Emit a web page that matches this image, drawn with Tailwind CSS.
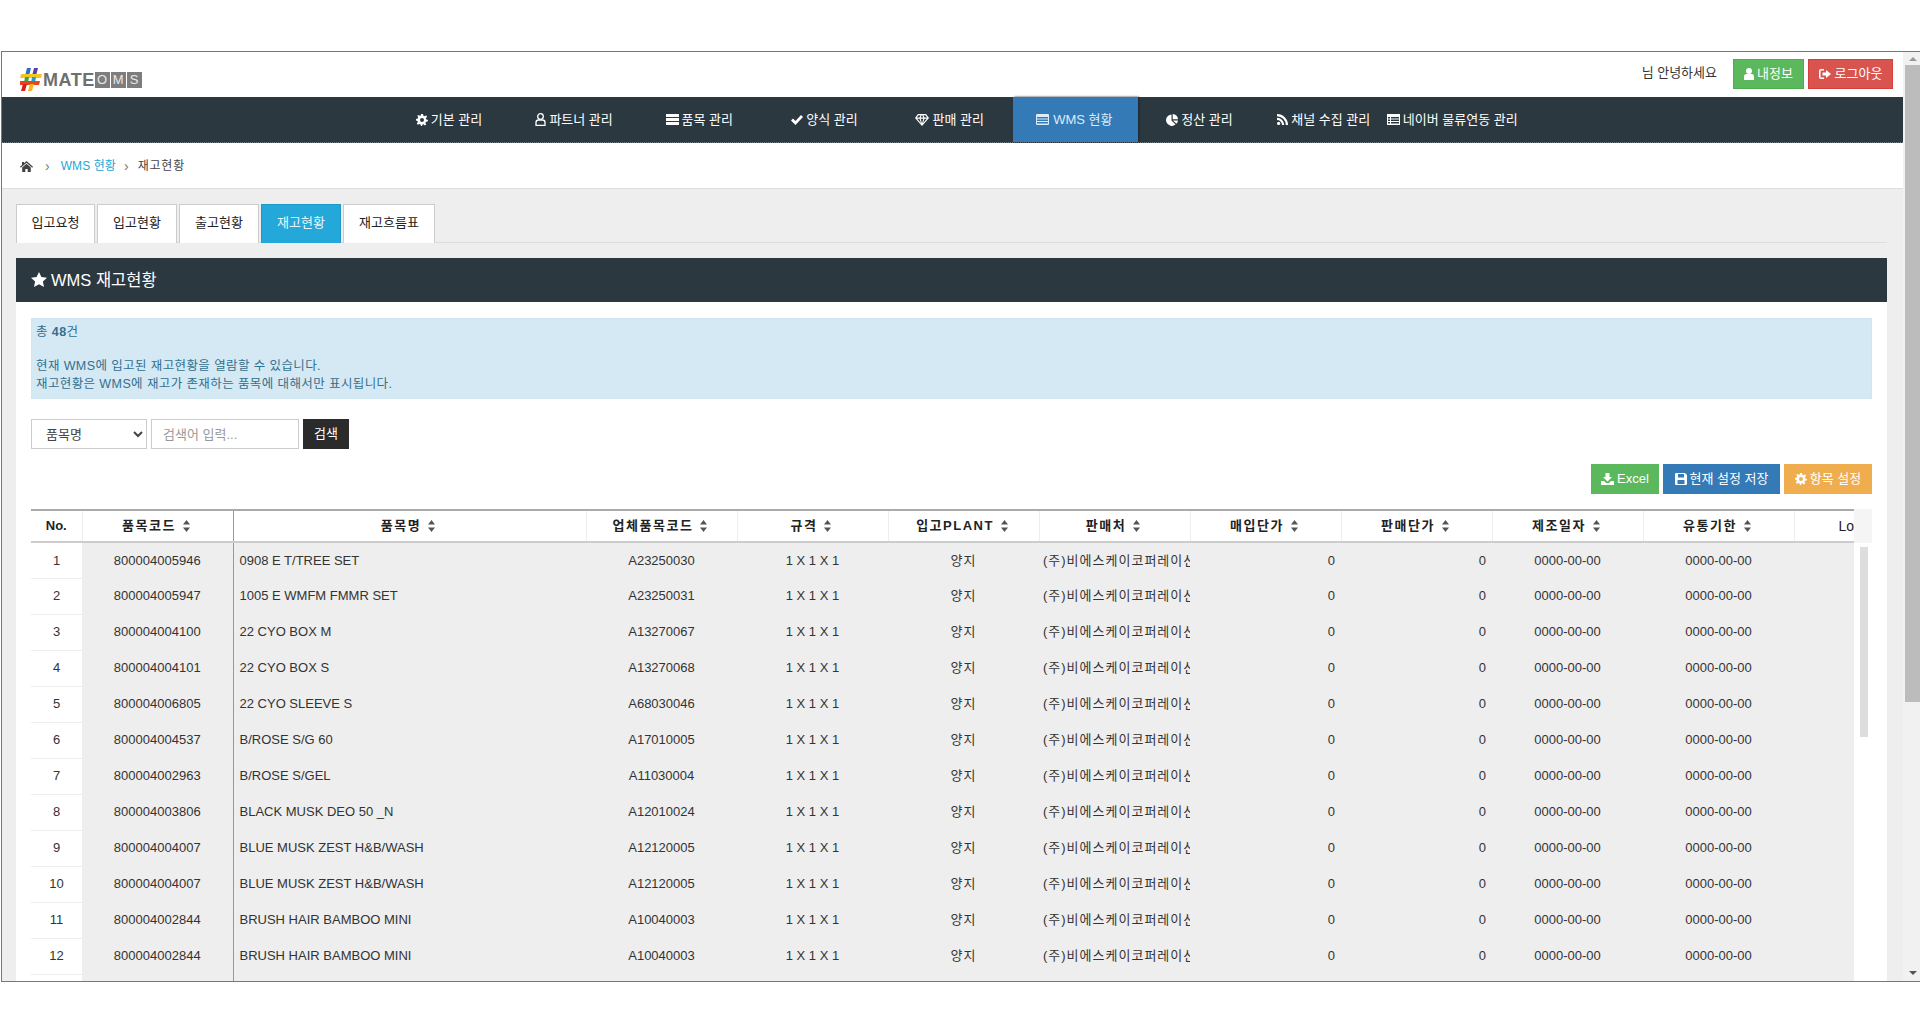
<!DOCTYPE html>
<html lang="ko">
<head>
  <meta charset="utf-8"/>
  <meta content="width=device-width, initial-scale=1.0" name="viewport"/>
  <title>MATE OMS - WMS 재고현황</title>
  <script src="https://cdn.jsdelivr.net/npm/@tailwindcss/browser@4"></script>
</head>
<body class="bg-white h-[1030px] overflow-hidden pt-[51px] text-[13px] text-[#333] font-['Liberation_Sans','Noto_Sans_CJK_KR',sans-serif]">
  <div class="h-[929px] border-t border-b border-l border-[#777] ml-px flex overflow-hidden box-content">
    <div class="w-[1901px] flex flex-col overflow-hidden">
      <!-- top bar -->
      <header class="h-[45px] shrink-0 bg-white flex justify-between pl-[18px] pr-[10px]">
        <div class="flex items-center pt-[10px] gap-[1px]">
          <svg width="22" height="23" viewBox="0 0 22 23">
            <polygon points="7,0 11,0 9,8 5,8" fill="#2f6fc4"/>
            <polygon points="14,0 18,0 16,8 12,8" fill="#5b3fa8"/>
            <polygon points="1,6 22,6 21,10 0,10" fill="#f2c81e"/>
            <polygon points="5,9 9,9 8,15 4,15" fill="#3aa64a"/>
            <polygon points="12,9 16,9 15,15 11,15" fill="#1f9fd0"/>
            <polygon points="0,13 20,13 19,17 0,17" fill="#e8451f"/>
            <polygon points="3,16 7,16 5,23 1,23" fill="#d81e1e"/>
            <polygon points="10,16 14,16 12,23 8,23" fill="#f5b51b"/>
          </svg>
          <span class="font-bold text-[18px] leading-none text-[#6f6f6f] tracking-[0.5px]">MATE</span>
          <span class="flex gap-px -ml-[1px]">
            <span class="w-[15px] h-[16px] bg-[#7d7d7d] text-[#e8e8e8] text-[13px] leading-[16px] text-center">O</span>
            <span class="w-[15px] h-[16px] bg-[#7d7d7d] text-[#e8e8e8] text-[13px] leading-[16px] text-center">M</span>
            <span class="w-[15px] h-[16px] bg-[#7d7d7d] text-[#e8e8e8] text-[13px] leading-[16px] text-center">S</span>
          </span>
        </div>
        <div class="flex items-start pt-[7px]">
          <span class="mt-[5px] mr-[16px] leading-[18px]">님 안녕하세요</span>
          <a class="h-[30px] w-[71px] flex items-center justify-center gap-[3px] bg-[#5cb85c] border border-[#4cae4c] text-white" href="#">
            <svg width="10" height="12" viewBox="0 0 10 12" fill="#fff"><circle cx="5" cy="3" r="3"/><path d="M0 12V8.500Q0 6 2.500 6H7.500Q10 6 10 8.500V12Z"/></svg>내정보
          </a>
          <a class="ml-[4px] h-[30px] w-[85px] flex items-center justify-center gap-[4px] bg-[#d9534f] border border-[#d43f3a] text-white" href="#">
            <svg width="12" height="12" viewBox="0 0 12 12" fill="#fff"><path d="M5 1H2Q0 1 0 3V9Q0 11 2 11H5V9.500H2.500Q1.500 9.500 1.500 8.500V3.500Q1.500 2.500 2.500 2.500H5Z"/><path d="M7 2L12 6L7 10V7.500H3.500V4.500H7Z"/></svg>로그아웃
          </a>
        </div>
      </header>

      <!-- main nav -->
      <nav class="h-[46px] shrink-0 bg-[#2b3840] border-b border-dotted border-[#6f7a80] flex justify-center text-white">
        <a class="w-[125.200px] pr-[2px] flex items-center justify-center gap-[3px]" href="#">
          <svg width="12" height="12" viewBox="0 0 12 12" fill="#fff"><path fill-rule="evenodd" d="M5 0H7L7.400 1.700 8.700 2.200 10.200 1.300 11 3 9.800 4.200 10.100 5.300 12 6 11.700 7.500 10 7.700 9.400 9 10.300 10.500 8.900 11.400 7.600 10.300 6.500 10.500 6 12H5L4.500 10.400 3.300 9.900 1.800 10.800 0.800 9.500 1.900 8.100 1.500 7 0 6.500 0 5 1.700 4.600 2.200 3.300 1.300 1.800 2.800 0.900 4.100 2 4.700 1.600ZM6 4A2 2 0 1 0 6 8 2 2 0 1 0 6 4Z"/></svg>기본 관리
        </a>
        <a class="w-[125.200px] pr-[2px] flex items-center justify-center gap-[3px]" href="#">
          <svg width="11" height="13" viewBox="0 0 11 13" fill="none" stroke="#fff" stroke-width="1.300"><circle cx="5.500" cy="3.500" r="2.800"/><path d="M1 12.300V9.500Q1 7 3.500 7H7.500Q10 7 10 9.500V12.300Z"/></svg>파트너 관리
        </a>
        <a class="w-[125.200px] pr-[2px] flex items-center justify-center gap-[3px]" href="#">
          <svg width="13" height="11" viewBox="0 0 13 11" fill="#fff"><path d="M0 0H13V3H0ZM0 4H13V7H0ZM0 8H13V11H0Z"/></svg>품목 관리
        </a>
        <a class="w-[125.200px] pr-[2px] flex items-center justify-center gap-[3px]" href="#">
          <svg width="12" height="10" viewBox="0 0 12 10" fill="#fff"><path d="M0 5.500L2 3.500 4.500 6 10 0 12 2 4.500 10Z"/></svg>양식 관리
        </a>
        <a class="w-[125.200px] pr-[2px] flex items-center justify-center gap-[3px]" href="#">
          <svg width="14" height="12" viewBox="0 0 14 12" fill="#fff"><path fill-rule="evenodd" d="M3 0H11L14 4 7 12 0 4ZM3.600 1.200L1.800 3.600H4.500L5.500 1.200ZM6.700 1.200L5.700 3.600H8.300L7.300 1.200ZM8.500 1.200L9.500 3.600H12.200L10.400 1.200ZM2.200 4.700L6 9.200 4.500 4.700ZM5.700 4.700L7 9.500 8.300 4.700ZM9.500 4.700L8 9.200 11.800 4.700Z"/></svg>판매 관리
        </a>
        <a class="w-[125.200px] pr-[3px] flex items-center justify-center gap-[4px] bg-[#337ab7] text-[#dcebf7] shadow-[1px_0_2px_#1d2830]" href="#">
          <svg width="13" height="11" viewBox="0 0 13 11" fill="#dcebf7"><path fill-rule="evenodd" d="M1 0H12Q13 0 13 1V10Q13 11 12 11H1Q0 11 0 10V1Q0 0 1 0ZM1 3V4.500H12V3ZM1 5.500V7H12V5.500ZM1 8V9.500H12V8Z"/></svg>WMS 현황
        </a>
        <a class="w-[125.200px] pr-[3px] flex items-center justify-center gap-[3px]" href="#">
          <svg width="12" height="12" viewBox="0 0 12 12" fill="#fff"><path d="M5.500 0.500V6.500L9.500 10.500A5.700 5.700 0 1 1 5.500 0.500Z"/><path d="M6.700 0A5.500 5.500 0 0 1 12 5.300H6.700Z"/><path d="M7 6.500H12A5.500 5.500 0 0 1 10.400 9.800Z"/></svg>정산 관리
        </a>
        <a class="w-[125.200px] pr-[5px] flex items-center justify-center gap-[3px]" href="#">
          <svg width="11" height="11" viewBox="0 0 11 11" fill="#fff"><circle cx="1.600" cy="9.400" r="1.600"/><path d="M0 3.800A7.200 7.200 0 0 1 7.200 11H5A5 5 0 0 0 0 6Z"/><path d="M0 0A11 11 0 0 1 11 11H8.800A8.800 8.800 0 0 0 0 2.200Z"/></svg>채널 수집 관리
        </a>
        <a class="flex items-center gap-[3px] -ml-[2px]" href="#">
          <svg width="13" height="11" viewBox="0 0 13 11" fill="#fff"><path fill-rule="evenodd" d="M0 0H13V11H0ZM1 3V4.500H3V3ZM4 3V4.500H12V3ZM1 5.500V7H3V5.500ZM4 5.500V7H12V5.500ZM1 8V9.500H3V8ZM4 8V9.500H12V8Z"/></svg>네이버 물류연동 관리
        </a>
      </nav>

      <!-- breadcrumb -->
      <div class="h-[46px] shrink-0 bg-white border-b border-[#ddd] flex items-center pl-[18px] pt-[1px] text-[12px]">
        <svg width="13" height="11" viewBox="0 0 13 11" fill="#444"><path d="M6.500 0L13 5.800 12.200 6.700 6.500 1.700 0.800 6.700 0 5.800 2 4V1H4V2.200Z"/><path d="M2.200 6.500L6.500 2.800 10.800 6.500V11H7.700V8H5.300V11H2.200Z"/></svg>
        <span class="ml-[12px] text-[#777] text-[14px] leading-none">›</span>
        <a class="ml-[11px] text-[#22a7d5] tracking-[0.100px]" href="#">WMS 현황</a>
        <span class="ml-[8px] text-[#777] text-[14px] leading-none">›</span>
        <span class="ml-[9px] text-[#444] tracking-[0.800px]">재고현황</span>
      </div>

      <div class="flex-1 bg-[#eeeeee] pl-[14px] pr-[16px] pt-[15px] min-h-0 flex flex-col">
        <!-- tabs -->
        <div class="h-[39px] shrink-0 flex gap-[2px] border-b border-[#ddd]">
          <a class="h-[39px] pb-[2px] w-[79px] bg-white border border-[#ccc] border-b-0 flex items-center justify-center text-[#222]" href="#">입고요청</a>
          <a class="h-[39px] pb-[2px] w-[80px] bg-white border border-[#ccc] border-b-0 flex items-center justify-center text-[#222]" href="#">입고현황</a>
          <a class="h-[39px] pb-[2px] w-[80px] bg-white border border-[#ccc] border-b-0 flex items-center justify-center text-[#222]" href="#">출고현황</a>
          <a class="h-[39px] pb-[2px] w-[80px] bg-[#23a8d9] border border-[#1f9ac8] border-b-0 flex items-center justify-center text-[#e6f6fc]" href="#">재고현황</a>
          <a class="h-[39px] pb-[2px] w-[92px] bg-white border border-[#ccc] border-b-0 flex items-center justify-center text-[#222]" href="#">재고흐름표</a>
        </div>

        <!-- panel -->
        <section class="mt-[15px] flex-1 min-h-0 bg-white flex flex-col">
          <h2 class="h-[44px] shrink-0 bg-[#2b3840] text-white text-[16.500px] flex items-center gap-[4px] pl-[15px]">
            <svg class="-mt-[2px]" width="16" height="15" viewBox="0 0 16 15" fill="#fff"><path d="M8 0L10.400 5 16 5.700 11.900 9.500 13 15 8 12.300 3 15 4.100 9.500 0 5.700 5.600 5Z"/></svg>WMS 재고현황
          </h2>
          <div class="flex-1 min-h-0 pl-[15px] pr-[15px] pt-[16px] flex flex-col">
            <div class="h-[81px] shrink-0 bg-[#d5e9f4] border border-[#d0e7f1] text-[#31708f] pl-[4px] pt-[4px] text-[12.500px] leading-[18px] tracking-[0.400px]">
              <p>총 <b>48</b>건</p>
              <p class="mt-[16px]">현재 WMS에 입고된 재고현황을 열람할 수 있습니다.</p>
              <p>재고현황은 WMS에 재고가 존재하는 품목에 대해서만 표시됩니다.</p>
            </div>

            <form class="mt-[20px] h-[30px] shrink-0 flex gap-[4px]">
              <select class="w-[116px] h-[30px] bg-white border border-[#ccc] pl-[10px] text-[#444]">
                <option>품목명</option>
              </select>
              <input class="w-[148px] h-[30px] bg-white border border-[#ccc] pl-[11px] placeholder:text-[#999]" placeholder="검색어 입력..."/>
              <button class="w-[46px] h-[30px] bg-[#2b2b2b] text-white" type="button">검색</button>
            </form>

            <div class="mt-[15px] h-[30px] shrink-0 flex justify-end gap-[4px] text-white">
              <a class="w-[68px] bg-[#5cb85c] flex items-center justify-center gap-[3px]" href="#">
                <svg width="13" height="12" viewBox="0 0 13 12" fill="#fff"><path d="M4.500 0H8.500V4H11L6.500 8.500 2 4H4.500Z"/><path d="M0 8H3L5 10H8L10 8H13V12H0Z"/></svg>Excel
              </a>
              <a class="w-[117px] bg-[#337ab7] flex items-center justify-center gap-[3px]" href="#">
                <svg width="12" height="12" viewBox="0 0 12 12" fill="#fff"><path fill-rule="evenodd" d="M1 0H10L12 2V11Q12 12 11 12H1Q0 12 0 11V1Q0 0 1 0ZM3 1V4.500H9V1ZM2.500 7V11H9.500V7Z"/></svg>현재 설정 저장
              </a>
              <a class="w-[88px] bg-[#f0ad4e] flex items-center justify-center gap-[3px]" href="#">
                <svg width="12" height="12" viewBox="0 0 12 12" fill="#fff"><path fill-rule="evenodd" d="M5 0H7L7.400 1.700 8.700 2.200 10.200 1.300 11 3 9.800 4.200 10.100 5.300 12 6 11.700 7.500 10 7.700 9.400 9 10.300 10.500 8.900 11.400 7.600 10.300 6.500 10.500 6 12H5L4.500 10.400 3.300 9.900 1.800 10.800 0.800 9.500 1.900 8.100 1.500 7 0 6.500 0 5 1.700 4.600 2.200 3.300 1.300 1.800 2.800 0.900 4.100 2 4.700 1.600ZM6 4A2 2 0 1 0 6 8 2 2 0 1 0 6 4Z"/></svg>항목 설정
              </a>
            </div>

            <!-- grid -->
            <div class="mt-[15px] flex-1 min-h-0 flex overflow-hidden">
              <div class="w-[1823px] overflow-hidden">
                <table class="table-fixed w-[1823px] border-collapse border-t-2 border-[#aaa]">
                  <colgroup>
                    <col class="w-[51px]"/><col class="w-[151px]"/><col class="w-[353px]"/><col class="w-[151px]"/><col class="w-[151px]"/><col class="w-[151px]"/><col class="w-[151px]"/><col class="w-[151px]"/><col class="w-[151px]"/><col class="w-[151px]"/><col class="w-[151px]"/><col class="w-[60px]"/>
                  </colgroup>
                  <thead><tr id="head" class="h-[32px] border-b-2 border-[#ccc]"></tr></thead>
                  <tbody id="rows"></tbody>
                </table>
              </div>
              <div class="w-[18px] flex flex-col">
                <div class="h-[34px] bg-[#f5f5f5] shrink-0"></div>
                <div class="w-[8px] h-[190px] ml-[6px] mt-[4px] bg-[#dddddd]"></div>
              </div>
            </div>
          </div>
        </section>
      </div>
    </div>

    <!-- page scrollbar -->
    <div class="w-[17px] shrink-0 bg-[#f1f1f1] pl-[2px] flex flex-col">
      <div class="h-[13px] flex items-center justify-center shrink-0">
        <div class="w-0 h-0 border-l-[4px] border-r-[4px] border-b-[4px] border-l-transparent border-r-transparent border-b-[#999]"></div>
      </div>
      <div class="h-[637px] bg-[#bcbcbc] shrink-0"></div>
      <div class="mt-auto h-[17px] flex items-center justify-center shrink-0">
        <div class="w-0 h-0 border-l-[4px] border-r-[4px] border-t-[4px] border-l-transparent border-r-transparent border-t-[#555]"></div>
      </div>
    </div>
  </div>

  <script>
    const sortIcon = '<svg class="inline-block ml-[7px] align-[-2px]" width="7" height="12" viewBox="0 0 7 12" fill="#555"><path d="M3.500 0L7 4.500H0Z"/><path d="M3.500 12L7 7.500H0Z"/></svg>';
    const headers = ['품목코드', '품목명', '업체품목코드', '규격', '입고PLANT', '판매처', '매입단가', '판매단가', '제조일자', '유통기한'];

    let headHtml = '<th class="border-r border-[#eee] text-[13px] font-bold text-[#222]">No.</th>';
    headers.forEach((name, i) => {
      const divider = i === 0 ? 'border-r border-[#999]' : 'border-r border-[#eee]';
      headHtml += '<th class="' + divider + ' pr-[3px] font-bold text-[13px] tracking-[1.500px] text-[#222]">' + name + sortIcon + '</th>';
    });
    headHtml += '<th class="text-[14px] font-normal text-[#222] text-right">Lo</th>';
    document.getElementById('head').innerHTML = headHtml;

    const items = [
      ['800004005946', '0908 E T/TREE SET', 'A23250030'],
      ['800004005947', '1005 E WMFM FMMR SET', 'A23250031'],
      ['800004004100', '22 CYO BOX M', 'A13270067'],
      ['800004004101', '22 CYO BOX S', 'A13270068'],
      ['800004006805', '22 CYO SLEEVE S', 'A68030046'],
      ['800004004537', 'B/ROSE S/G 60', 'A17010005'],
      ['800004002963', 'B/ROSE S/GEL', 'A11030004'],
      ['800004003806', 'BLACK MUSK DEO 50 _N', 'A12010024'],
      ['800004004007', 'BLUE MUSK ZEST H&amp;B/WASH', 'A12120005'],
      ['800004004007', 'BLUE MUSK ZEST H&amp;B/WASH', 'A12120005'],
      ['800004002844', 'BRUSH HAIR BAMBOO MINI', 'A10040003'],
      ['800004002844', 'BRUSH HAIR BAMBOO MINI', 'A10040003']
    ];

    const cell = 'bg-[#eeeeee] text-center';
    let rowsHtml = '';
    items.forEach((item, i) => {
      rowsHtml += '<tr class="h-[36px]">' +
        '<td class="bg-white text-center border-b border-[#eee]">' + (i + 1) + '</td>' +
        '<td class="' + cell + ' border-r border-[#999]">' + item[0] + '</td>' +
        '<td class="bg-[#eeeeee] pl-[6px] whitespace-nowrap">' + item[1] + '</td>' +
        '<td class="' + cell + '">' + item[2] + '</td>' +
        '<td class="' + cell + '">1 X 1 X 1</td>' +
        '<td class="' + cell + ' tracking-[1px]">양지</td>' +
        '<td class="bg-[#eeeeee] pl-[4px] overflow-hidden whitespace-nowrap tracking-[1px]">(주)비에스케이코퍼레이션</td>' +
        '<td class="bg-[#eeeeee] text-right pr-[6px]">0</td>' +
        '<td class="bg-[#eeeeee] text-right pr-[6px]">0</td>' +
        '<td class="' + cell + '">0000-00-00</td>' +
        '<td class="' + cell + '">0000-00-00</td>' +
        '<td class="bg-[#eeeeee]"></td>' +
        '</tr>';
    });
    rowsHtml += '<tr class="h-[36px]"><td class="bg-white"></td><td class="bg-[#eeeeee] border-r border-[#999]"></td><td class="bg-[#eeeeee]" colspan="10"></td></tr>';
    document.getElementById('rows').innerHTML = rowsHtml;
  </script>
</body>
</html>
